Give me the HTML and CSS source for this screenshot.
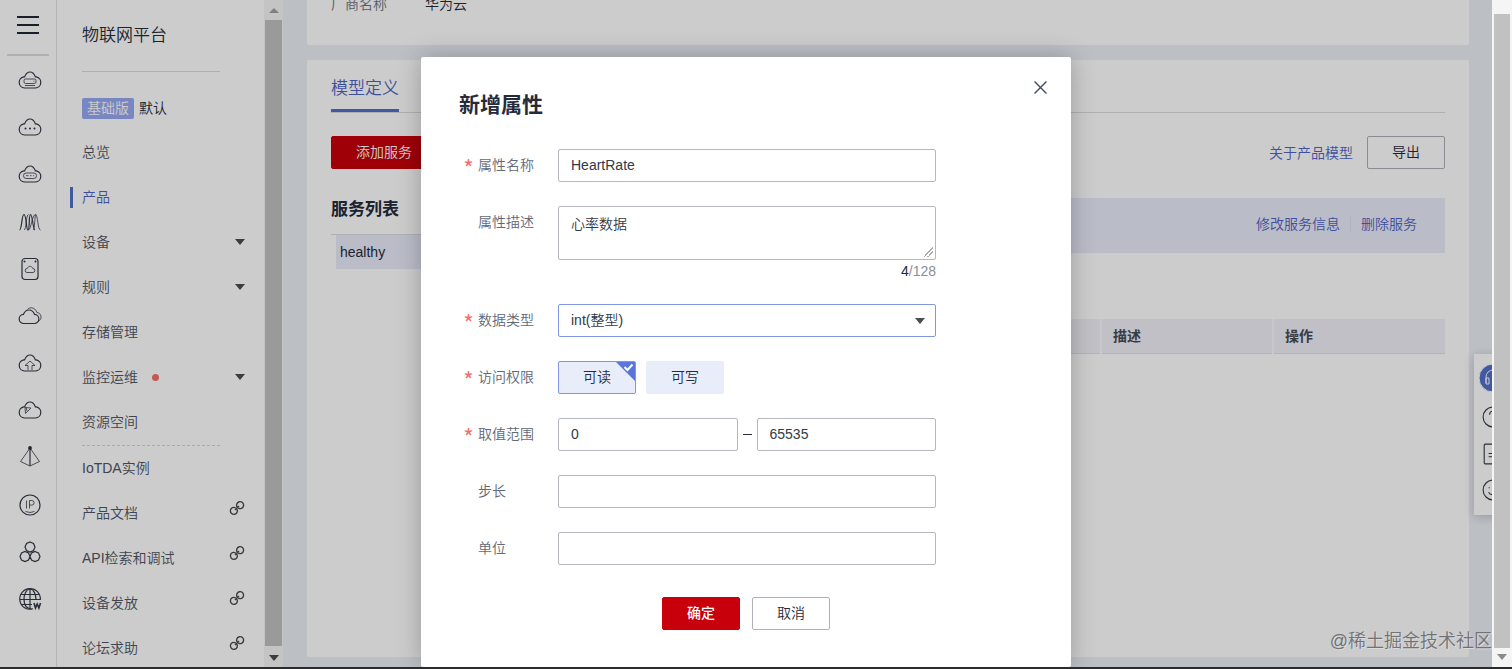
FILE: index.html
```html
<!DOCTYPE html>
<html lang="zh-CN">
<head>
    <meta charset="UTF-8">
    <title>物联网平台</title>
    <link rel="stylesheet" href="styles.css">
</head>
<body>
    <svg class="symbols" aria-hidden="true">
        <symbol id="cloud" viewBox="0 0 24 24">
            <path d="M6.500 20a5.600 5.600 0 0 1-.7-11.100h.8C7.800 5.600 9.700 4 12 4s4.200 1.600 5.400 4.900h.8a5.600 5.600 0 0 1-.7 11.100z"/>
        </symbol>
        <symbol id="chain" viewBox="0 0 16 16">
            <path d="M6 10l4-4M8.300 7.200a3.500 3.500 0 1 1 1 .9M7.700 8.800a3.500 3.500 0 1 1-1-.9"/>
        </symbol>
    </svg>

    <div class="window">
        <div class="app">
            <nav class="rail" aria-label="服务">
                <button class="menu-btn" aria-label="菜单"><span></span><span></span><span></span></button>
                <ul class="rail-list">
                    <li><svg viewBox="0 0 24 24"><use href="#cloud"/><rect class="thin" x="6" y="11" width="12" height="4.500" rx="1.500"/><path class="thin" d="M7 17.500h10M15.500 13.200h1"/></svg></li>
                    <li><svg viewBox="0 0 24 24"><use href="#cloud"/><path class="dots" d="M7.500 13.500h.01M12 13.500h.01M16.500 13.500h.01"/></svg></li>
                    <li><svg viewBox="0 0 24 24"><use href="#cloud"/><rect class="thin" x="5.500" y="11" width="13" height="5.500" rx="2.700"/><path class="thin" d="M8 13.700h2.500M12 13.700h1.500M15 13.700h1"/></svg></li>
                    <li><svg viewBox="0 0 24 24"><path d="M1.500 20C4 20 3.500 4.500 6 4.500S8 20 10 20 10.500 4.500 12.500 4.500 15 20 17 20"/><path class="thin" d="M6 20c2.500 0 2-15.500 4.500-15.500M10.500 20C13 20 14 4.500 17.500 4.500c2.500 0 2 15.500 5 15.500M15 20c2 0 1.500-15.500 3-15.500"/></svg></li>
                    <li><svg viewBox="0 0 24 24"><rect x="4" y="1.500" width="16" height="21" rx="3"/><path class="thin" d="M9 15.500a2 2 0 0 1 .3-4c.5-1.500 1.500-2.200 2.700-2.200s2.200.7 2.700 2.200a2 2 0 0 1 .3 4z"/><path class="dots" d="M6.500 4.500h.01M17.500 4.500h.01"/></svg></li>
                    <li><svg viewBox="0 0 24 24"><path d="M6 19.500a4.600 4.600 0 0 1-.5-9.200C6.500 7.500 8.500 6 11 6s4.500 1.500 5.500 4.300a4.600 4.600 0 0 1-.5 9.200z"/><path class="thin" d="M9.500 5.500c1-1.200 2.200-1.700 3.700-1.700 2.800 0 4.600 1.700 5.600 4.600 2.700.4 4.200 2.200 4.200 4.600 0 2-1 3.500-2.700 4.200"/></svg></li>
                    <li><svg viewBox="0 0 24 24"><use href="#cloud"/><path class="thin" d="M10 19v-4.500H7l5-4.500 5 4.500h-3V19"/></svg></li>
                    <li><svg viewBox="0 0 24 24"><use href="#cloud"/><path class="thin" d="M7 9.500l6 .5-5.500 5.500zM8 9.500l1 3.500"/></svg></li>
                    <li><svg viewBox="0 0 24 24"><path d="M12 3v18"/><path class="thin" d="M12 3L2.500 16.500 12 21l9.500-4.500z"/><circle class="solid" cx="12" cy="3" r="1.300"/></svg></li>
                    <li><svg viewBox="0 0 24 24"><circle cx="12" cy="12" r="10"/><path class="thin" d="M8.500 7.500v8M11.500 15.500v-8h2.300a2.300 2.300 0 0 1 0 4.600h-2.300M7.500 18.500q4.500 2 9 0"/></svg></li>
                    <li><svg viewBox="0 0 24 24"><path d="M12 2l3.500 1.500L17 7l-1.500 3.500L12 12l-3.500-1.500L7 7l1.500-3.500zM7 11.500l3.500 1.500 1.500 3.500-1.500 3.500L7 21.500 3.500 20 2 16.500 3.500 13zM17 11.500l3.500 1.500 1.500 3.500-1.500 3.500-3.500 1.500-3.500-1.500-1.500-3.500 1.500-3.500z"/></svg></li>
                    <li><svg viewBox="0 0 24 24"><path d="M15 21.800A10.300 10.300 0 1 1 22.300 13"/><path d="M12 1.700v20.600M3 7.500h18M1.700 12.500h20.600M3 17.500h11M14 22c-7 0-8-6-8-10s2-10 6-10 6 6 6 11"/><path class="bold" d="M16 16l1.500 5 1.700-4 1.700 4 1.600-5"/></svg></li>
                </ul>
            </nav>

            <aside class="sidenav">
                <h2 class="sidenav-title">物联网平台</h2>
                <div class="instance"><span class="badge">基础版</span>默认</div>
                <ul class="nav-list">
                    <li><a href="#">总览</a></li>
                    <li><a href="#" class="active">产品</a></li>
                    <li><a href="#">设备<i class="caret"></i></a></li>
                    <li><a href="#">规则<i class="caret"></i></a></li>
                    <li><a href="#">存储管理</a></li>
                    <li><a href="#">监控运维<i class="dot"></i><i class="caret"></i></a></li>
                    <li><a href="#">资源空间</a></li>
                    <li class="split" role="separator"></li>
                    <li><a href="#">IoTDA实例</a></li>
                    <li><a href="#">产品文档<svg class="chain"><use href="#chain"/></svg></a></li>
                    <li><a href="#">API检索和调试<svg class="chain"><use href="#chain"/></svg></a></li>
                    <li><a href="#">设备发放<svg class="chain"><use href="#chain"/></svg></a></li>
                    <li><a href="#">论坛求助<svg class="chain"><use href="#chain"/></svg></a></li>
                </ul>
            </aside>
            <div class="side-scroll">
                <i class="caret up"></i>
                <div class="thumb"></div>
                <i class="caret"></i>
            </div>

            <main class="main">
                <section class="card info">
                    <span class="info-label">厂商名称</span><span>华为云</span>
                </section>
                <section class="card model">
                    <div class="tabs"><a href="#" class="tab">模型定义</a></div>
                    <div class="toolbar">
                        <button class="btn btn-primary btn-add">添加服务</button>
                        <div class="toolbar-right">
                            <a href="#">关于产品模型</a>
                            <button class="btn">导出</button>
                        </div>
                    </div>
                    <div class="model-body">
                        <div class="services">
                            <h3>服务列表</h3>
                            <a href="#" class="service">healthy</a>
                        </div>
                        <div class="detail">
                            <div class="banner">
                                <a href="#">修改服务信息</a>
                                <i class="bar"></i>
                                <a href="#">删除服务</a>
                            </div>
                            <table class="props">
                                <thead>
                                    <tr><td></td><th class="col">描述</th><th class="col">操作</th></tr>
                                </thead>
                            </table>
                        </div>
                    </div>
                </section>
            </main>

            <div class="helper">
                <svg class="helper-main" viewBox="0 0 28 28"><circle cx="14" cy="14" r="14"/><path d="M7 19v-6a7 7 0 0 1 14 0v6M7 14h3v6H7zM18 14h3v6h-3z"/></svg>
                <svg viewBox="0 0 20 20"><circle cx="10" cy="10" r="9"/><path d="M7 8a3 3 0 1 1 4 2.500c-1 .5-1 1-1 2M10 14v1"/></svg>
                <svg viewBox="0 0 20 20"><rect x="2" y="1" width="16" height="18" rx="1"/><path d="M6 9.500h8M6 12.500h8"/></svg>
                <svg viewBox="0 0 20 20"><circle cx="10" cy="10" r="9"/><path d="M6 12c1 3 7 3 8 0M6.500 7.500v1M13.500 7.500v1"/></svg>
            </div>

            <div class="overlay">
                <div class="modal" role="dialog" aria-labelledby="modal-title">
                    <button class="close" aria-label="关闭"><svg viewBox="0 0 12 12"><path d="M.5.5l11 11M11.500.5l-11 11"/></svg></button>
                    <h1 id="modal-title">新增属性</h1>
                    <form class="form">
                        <div class="row">
                            <label for="name"><span class="star">*</span>属性名称</label>
                            <input id="name" type="text" value="HeartRate">
                        </div>
                        <div class="row">
                            <label for="desc"><span class="star"></span>属性描述</label>
                            <div class="area">
                                <textarea id="desc">心率数据</textarea>
                                <div class="count"><b>4</b>/128</div>
                            </div>
                        </div>
                        <div class="row">
                            <label for="type"><span class="star">*</span>数据类型</label>
                            <div class="select">
                                <select id="type"><option>int(整型)</option></select>
                                <i class="caret"></i>
                            </div>
                        </div>
                        <div class="row">
                            <label for="read"><span class="star">*</span>访问权限</label>
                            <div class="toggles">
                                <button type="button" id="read" class="toggle on" aria-pressed="true">可读<svg class="tick" viewBox="0 0 19 19"><path class="corner" d="M0 0h19v19z"/><path class="check" d="M8.500 5l3 3 5-5.500"/></svg></button>
                                <button type="button" class="toggle" aria-pressed="false">可写</button>
                            </div>
                        </div>
                        <div class="row">
                            <label for="min"><span class="star">*</span>取值范围</label>
                            <div class="range">
                                <input id="min" type="text" value="0">
                                <i class="dash"></i>
                                <input type="text" value="65535" aria-label="最大值">
                            </div>
                        </div>
                        <div class="row">
                            <label for="step"><span class="star"></span>步长</label>
                            <input id="step" type="text">
                        </div>
                        <div class="row">
                            <label for="unit"><span class="star"></span>单位</label>
                            <input id="unit" type="text">
                        </div>
                        <div class="actions">
                            <button type="button" class="btn btn-primary strong">确定</button>
                            <button type="button" class="btn">取消</button>
                        </div>
                    </form>
                </div>
            </div>
            <div class="watermark">@稀土掘金技术社区</div>
        </div>
        <div class="page-scroll">
            <div class="thumb"></div>
            <i class="caret"></i>
        </div>
    </div>
</body>
</html>
```

FILE: styles.css
```css
* {
    box-sizing: border-box;
}

body {
    margin: 0;
    font-family: "Liberation Sans", "Noto Sans CJK SC", sans-serif;
    font-size: 14px;
    font-weight: 350;
    line-height: 20px;
    color: #252b3a;
    overflow: hidden;
}

button, input, select, textarea {
    font: inherit;
    color: inherit;
}

a {
    color: #5063c4;
    text-decoration: none;
}

h1, h2, h3, ul {
    margin: 0;
    padding: 0;
}

ul {
    list-style: none;
}

.symbols {
    display: none;
}

.window {
    display: flex;
    height: 100vh;
    border-bottom: 2px solid #2b2b2e;
}

.app {
    position: relative;
    display: flex;
    flex: 1;
    overflow: hidden;
    background: #ecf0f7;
}

.caret {
    border: 5px solid transparent;
    border-top: 6px solid #4a4c50;
    border-bottom: 0;
}

.caret.up {
    border-top: 0;
    border-bottom: 5px solid #a0a0a0;
}

/* icon rail */
.rail {
    display: flex;
    flex-direction: column;
    flex: none;
    width: 57px;
    background: #fff;
    border-right: 1px solid #e3e3e6;
}

.menu-btn {
    display: flex;
    flex-direction: column;
    gap: 6px;
    height: 56px;
    margin: 0 7px;
    padding: 16px 10px 0;
    background: none;
    border: 0;
    border-bottom: 2px solid #dcdcdc;
}

.menu-btn span {
    width: 22px;
    height: 2px;
    background: #202636;
}

.rail-list {
    display: flex;
    flex-direction: column;
    justify-content: space-between;
    align-items: center;
    flex: 1;
    padding: 12px 0 56px 3px;
}

.rail-list li {
    height: 24px;
}

.rail-list svg {
    width: 24px;
    height: 24px;
    fill: none;
    stroke: #343946;
    stroke-width: 1.2;
}

.rail-list .thin {
    stroke-width: .8;
}

.rail-list .dots {
    stroke-width: 2;
    stroke-linecap: round;
}

.rail-list .bold {
    stroke-width: 1.6;
}

.rail-list .solid {
    fill: #202636;
}

/* side navigation */
.sidenav {
    flex: none;
    width: 207px;
    background: #fff;
    overflow: hidden;
}

.sidenav-title {
    margin: 24px 44px 25px 25px;
    padding-bottom: 23px;
    font-size: 17px;
    font-weight: 350;
    line-height: 24px;
    border-bottom: 1px solid #dadada;
}

.instance {
    display: flex;
    align-items: center;
    gap: 5px;
    height: 22px;
    margin: 0 0 11px 25px;
}

.badge {
    padding: 0 5px;
    line-height: 21px;
    color: #fff;
    background: #96a8f2;
    border-radius: 2px;
}

.nav-list a {
    display: flex;
    align-items: center;
    height: 45px;
    padding: 0 19px 1px 25px;
    color: #505664;
}

.nav-list a.active {
    color: #5063c4;
}

.nav-list a.active::before {
    content: "";
    width: 3px;
    height: 21px;
    margin-left: -12px;
    margin-right: 9px;
    background: #526ecc;
}

.nav-list .caret {
    margin-left: auto;
}

.nav-list .dot {
    width: 7px;
    height: 7px;
    margin-left: 14px;
    border-radius: 50%;
    background: #f66f6a;
}

.split {
    margin: 0 44px 0 25px;
    border-top: 1px dashed #d5d5d8;
}

.chain {
    width: 16px;
    height: 16px;
    margin: 0 0 10px auto;
    fill: none;
    stroke: #4a4c50;
    stroke-width: 1.4;
}

.side-scroll {
    display: flex;
    flex-direction: column;
    align-items: center;
    justify-content: space-between;
    flex: none;
    width: 19px;
    padding: 8px 1px 6px;
    background: #f6f6f6;
}

.side-scroll .thumb {
    align-self: stretch;
    flex: 1;
    margin: 7px 0 9px;
    background: #c1c1c1;
}

/* page content */
.main {
    display: flex;
    flex-direction: column;
    gap: 15px;
    flex: 1;
    margin-top: -31px;
    padding: 0 23px 10px 24px;
}

.card {
    background: #fff;
    border-radius: 2px;
}

.info {
    padding: 25px 24px 31px;
}

.info-label {
    display: inline-block;
    width: 94px;
    color: #6c717d;
}

.model {
    flex: 1;
    padding: 17px 24px;
}

.tabs {
    display: flex;
    border-bottom: 1px solid #dadce0;
}

.tab {
    padding-bottom: 8px;
    font-size: 17px;
    line-height: 24px;
    border-bottom: 3px solid #526ecc;
}

.toolbar {
    display: flex;
    justify-content: space-between;
    margin: 23px 0 29px;
}

.toolbar-right {
    display: flex;
    align-items: center;
    gap: 14px;
}

.btn {
    width: 78px;
    height: 33px;
    padding: 0 0 1px;
    background: none;
    border: 1px solid #adb0b8;
    border-radius: 2px;
}

.btn-primary {
    color: #fff;
    background: #c7000b;
    border-color: #c7000b;
}

.btn-add {
    width: 106px;
}

.strong {
    font-weight: 500;
}

.model-body {
    display: flex;
    gap: 24px;
}

.services {
    flex: none;
    width: 220px;
}

.services h3 {
    padding-bottom: 12px;
    font-size: 17px;
    line-height: 24px;
    border-bottom: 1px solid #dadce0;
}

.service {
    display: block;
    margin-left: 5px;
    padding-left: 4px;
    line-height: 34px;
    color: #252b3a;
    background: #e9edfa;
}

.detail {
    flex: 1;
}

.banner {
    display: flex;
    align-items: center;
    justify-content: flex-end;
    gap: 10px;
    height: 55px;
    margin-bottom: 66px;
    padding: 0 28px 4px 0;
    background: #e9edfa;
}

.bar {
    width: 1px;
    height: 16px;
    background: #dfe1e6;
}

.props {
    width: 100%;
    table-layout: fixed;
    border-collapse: collapse;
    background: #f0f1f8;
    border-bottom: 1px solid #dfe1e6;
}

.props .col {
    width: 172px;
    height: 34px;
    padding: 0 0 0 11px;
    text-align: left;
    color: #464c59;
    border-left: 2px solid #fafafd;
}

/* floating help panel, half hidden at the edge */
.helper {
    position: absolute;
    top: 354px;
    right: -22px;
    display: flex;
    flex-direction: column;
    align-items: center;
    justify-content: space-between;
    width: 40px;
    height: 161px;
    padding: 10px 2px 14px 0;
    background: #fff;
    box-shadow: 0 2px 10px rgba(0, 0, 0, .2);
}

.helper svg {
    width: 22px;
    height: 22px;
    fill: none;
    stroke: #343946;
}

.helper .helper-main {
    width: 28px;
    height: 28px;
    fill: #526ecc;
    stroke: #fff;
}

/* dialog */
.overlay {
    position: absolute;
    inset: 0;
    display: flex;
    justify-content: center;
    padding-top: 57px;
    background: rgba(0, 0, 0, .2);
}

.modal {
    position: relative;
    width: 650px;
    padding: 36px 38px;
    background: #fff;
    border-radius: 2px;
    box-shadow: 0 0 24px rgba(0, 0, 0, .25);
}

.modal h1 {
    margin-bottom: 32px;
    font-size: 21px;
    font-weight: 700;
    line-height: 24px;
}

.close {
    position: absolute;
    top: 24px;
    right: 24px;
    width: 13px;
    height: 13px;
    padding: 0;
    background: none;
    border: 0;
}

.close svg {
    display: block;
    stroke: #464c59;
    stroke-width: 1.3;
}

.row {
    display: grid;
    grid-template-columns: 99px 378px;
    margin-bottom: 24px;
}

.row label {
    display: flex;
    height: 33px;
    padding-left: 4px;
    line-height: 33px;
    color: #626876;
}

.star {
    width: 15px;
    font-family: "Noto Sans CJK SC", sans-serif;
    font-size: 24px;
    line-height: 38px;
    color: #f66f6a;
}

.row input, .row textarea, .row select {
    display: block;
    width: 100%;
    height: 33px;
    padding: 0 12px 2px;
    color: #343946;
    background: #fff;
    border: 1px solid #b5b8bf;
    border-radius: 2px;
}

.row textarea {
    height: 54px;
    padding: 7px 12px;
}

.row textarea::-webkit-resizer {
    background: linear-gradient(135deg, transparent 50%, #aaa 50%, #aaa 57%, transparent 57%, transparent 70%, #aaa 70%, #aaa 77%, transparent 77%) 3px 3px / 10px 10px no-repeat;
}

.area {
    height: 74px;
}

.count {
    line-height: 23px;
    text-align: right;
    color: #8a8e99;
}

.count b {
    font-weight: 350;
    color: #252b3a;
}

.select {
    position: relative;
}

.row select {
    appearance: none;
    border-color: #7f96e2;
}

.select .caret {
    position: absolute;
    top: 14px;
    right: 11px;
}

.toggles {
    display: flex;
    gap: 10px;
}

.toggle {
    position: relative;
    width: 78px;
    height: 33px;
    padding: 0 0 1px;
    background: #e9edfa;
    border: 1px solid #e9edfa;
    border-radius: 2px;
}

.toggle.on {
    border-color: #7f96e2;
}

.tick {
    position: absolute;
    top: 0;
    right: 0;
    width: 19px;
    height: 19px;
}

.corner {
    fill: #5a76dc;
}

.check {
    fill: none;
    stroke: #fff;
    stroke-width: 2;
}

.range {
    display: flex;
    align-items: center;
    gap: 5px;
}

.dash {
    flex: none;
    width: 9px;
    height: 1px;
    background: #252b3a;
}

.actions {
    display: flex;
    justify-content: center;
    gap: 12px;
    padding-top: 8px;
}

.watermark {
    position: absolute;
    right: 0;
    bottom: 14px;
    font-size: 18px;
    line-height: 24px;
    color: #707276;
    text-shadow: 1px 1px 0 #dcdcdc;
}

/* page scrollbar */
.page-scroll {
    display: flex;
    flex-direction: column;
    align-items: center;
    width: 20px;
    padding: 14px 2px 7px;
    background: #f5f5f5;
}

.page-scroll .thumb {
    align-self: stretch;
    flex: 1;
    margin-bottom: 6px;
    background: #c1c1c1;
}

.page-scroll .caret {
    border-top-color: #8a8a8a;
}
```
